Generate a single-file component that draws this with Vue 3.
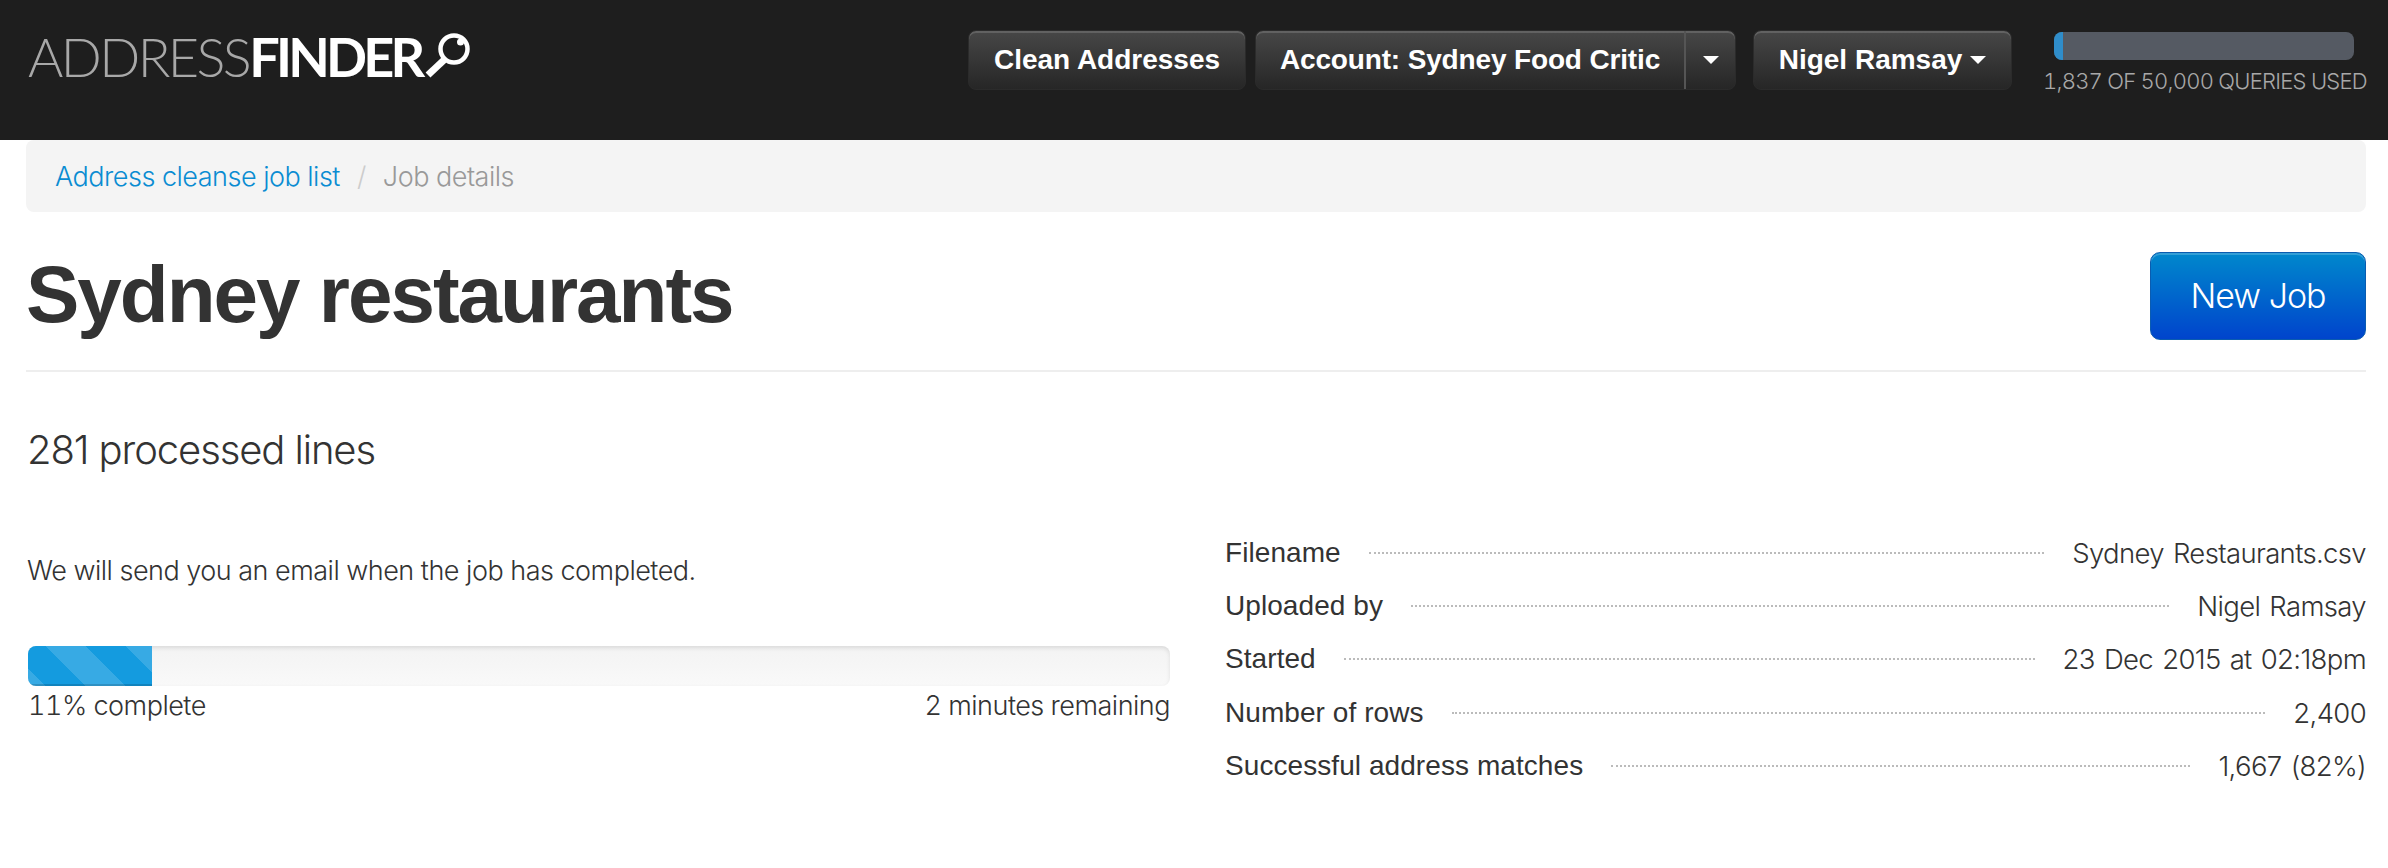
<script setup>
const details = [
  { label: 'Filename', value: 'Sydney Restaurants.csv' },
  { label: 'Uploaded by', value: 'Nigel Ramsay' },
  { label: 'Started', value: '23 Dec 2015 at 02:18pm' },
  { label: 'Number of rows', value: '2,400' },
  { label: 'Successful address matches', value: '1,667 (82%)' }
]
</script>

<template>
  <div class="page">
    <header class="topbar">
      <div class="logo">
        <span class="logo-thin">ADDRESS</span><span class="logo-bold">FINDER</span>
        <svg class="key" width="50" height="48" viewBox="0 0 50 48">
          <circle cx="33" cy="17" r="13.5" fill="none" stroke="#fff" stroke-width="4.5" />
          <path d="M23 28 L7 43" stroke="#fff" stroke-width="7" fill="none" />
          <circle cx="39.5" cy="10" r="3.5" fill="#fff" />
        </svg>
      </div>
      <nav class="nav">
        <button class="dark-btn clean">Clean Addresses</button>
        <div class="dark-btn account">
          <span class="account-label">Account: Sydney Food Critic</span>
          <span class="account-caret"><i class="caret"></i></span>
        </div>
        <button class="dark-btn user">Nigel Ramsay<i class="caret user-caret"></i></button>
      </nav>
      <div class="usage">
        <div class="usage-track"><div class="usage-fill"></div></div>
        <div class="usage-text">1,837 OF 50,000 QUERIES USED</div>
      </div>
    </header>

    <main class="content">
      <div class="crumbs">
        <a class="crumb-link">Address cleanse job list</a>
        <span class="crumb-sep">/</span>
        <span class="crumb-current">Job details</span>
      </div>

      <div class="title-row">
        <h1>Sydney restaurants</h1>
        <button class="new-job">New Job</button>
      </div>

      <h2>281 processed lines</h2>

      <div class="columns">
        <section class="status">
          <p>We will send you an email when the job has completed.</p>
          <div class="progress"><div class="progress-fill"></div></div>
          <div class="progress-labels">
            <span>11% complete</span>
            <span>2 minutes remaining</span>
          </div>
        </section>
        <section class="details">
          <div v-for="d in details" :key="d.label" class="detail">
            <span class="detail-label">{{ d.label }}</span>
            <span class="dots"></span>
            <span class="detail-value">{{ d.value }}</span>
          </div>
        </section>
      </div>
    </main>
  </div>
</template>

<style>
html, body { margin: 0; background: #fff; }
</style>

<style scoped>
.page {
  width: 2388px;
  height: 868px;
  overflow: hidden;
  font-family: "Liberation Sans", Arial, sans-serif;
  color: #333;
}
.topbar {
  height: 140px;
  box-sizing: border-box;
  background: #1e1e1e;
  display: flex;
  align-items: flex-start;
  padding: 0 23px 0 28px;
}
.logo {
  display: flex;
  align-items: flex-start;
  margin-top: 29px;
  height: 50px;
  line-height: 56px;
  font-size: 54px;
  font-family: "Lato", sans-serif;
  color: #fff;
}
.logo-thin { font-weight: 300; letter-spacing: -2.6px; color: #a8a8a8; }
.logo-bold { font-weight: 700; letter-spacing: -3.8px; }
.key { margin-top: 3px; margin-left: 0; }
.nav {
  margin-left: auto;
  margin-top: 30px;
  display: flex;
  gap: 9px;
}
.dark-btn {
  box-sizing: border-box;
  height: 60px;
  border: 1px solid #2b2b2b;
  border-radius: 8px;
  background: linear-gradient(#474747, #262626);
  box-shadow: inset 0 2px 0 rgba(255, 255, 255, .15);
  color: #fff;
  font: bold 28px/58px "Liberation Sans", Arial, sans-serif;
  padding: 0;
  display: flex;
  align-items: center;
  justify-content: center;
}
.clean { width: 278px; }
.account { width: 481px; justify-content: flex-start; margin-right: 8px; letter-spacing: -.15px; }
.account-label { width: 428px; text-align: center; }
.account-caret {
  flex: 1;
  height: 100%;
  border-left: 2px solid #555;
  display: flex;
  align-items: center;
  justify-content: center;
}
.user { width: 259px; }
.caret {
  display: block;
  width: 0;
  height: 0;
  border-left: 8px solid transparent;
  border-right: 8px solid transparent;
  border-top: 8px solid #fff;
}
.user-caret { margin-left: 8px; }
.usage {
  width: 321px;
  margin-left: 32px;
  padding-top: 32px;
}
.usage-track {
  width: 300px;
  height: 28px;
  margin-left: 10px;
  border-radius: 8px;
  background: #555a63;
  overflow: hidden;
}
.usage-fill { width: 9px; height: 100%; background: #2f8dca; }
.usage-text {
  margin-top: 6px;
  margin-left: -1px;
  font: 300 22px/30px "Inter", sans-serif;
  font-variant-numeric: tabular-nums;
  letter-spacing: -.75px;
  color: #a8a8a8;
  white-space: nowrap;
}
.content { padding: 0 22px 0 26px; }
.crumbs {
  height: 72px;
  box-sizing: border-box;
  background: #f4f4f4;
  border-radius: 8px;
  padding: 2px 29px 0;
  display: flex;
  align-items: center;
  font: 300 27px/32px "Inter", sans-serif;
  letter-spacing: -.5px;
}
.crumb-link { color: #0a8cd2; }
.crumb-sep { color: #ccc; margin: 0 17px; }
.crumb-current { color: #999; }
.title-row {
  display: flex;
  justify-content: space-between;
  align-items: flex-start;
  height: 160px;
  box-sizing: border-box;
  padding-top: 39px;
  border-bottom: 2px solid #eee;
}
h1 {
  margin: 0;
  font: bold 80px/88px "Liberation Sans", Arial, sans-serif;
  letter-spacing: -2px;
  color: #333;
}
.new-job {
  width: 216px;
  height: 88px;
  margin-top: 1px;
  padding: 0;
  border: 1px solid #0a5cb0;
  border-radius: 10px;
  background: linear-gradient(#0088cc, #0044cc);
  box-shadow: inset 0 2px 0 rgba(255, 255, 255, .2);
  color: #fff;
  font: 300 34px/86px "Inter", sans-serif;
  letter-spacing: -1px;
}
h2 {
  margin: 53px 0 0 1px;
  font: 300 40px/50px "Inter", sans-serif;
  letter-spacing: -1.1px;
  color: #333;
}
.columns {
  display: flex;
  justify-content: space-between;
  margin-top: 51px;
}
.status {
  width: 1142px;
  margin-left: 2px;
  padding-top: 25px;
  font: 300 27px/40px "Inter", sans-serif;
  letter-spacing: -.5px;
}
.status p { margin: 0 0 55px -1px; }
.progress {
  height: 40px;
  border-radius: 8px;
  background: linear-gradient(#f3f3f3, #f9f9f9);
  box-shadow: inset 0 2px 4px rgba(0, 0, 0, .1);
  overflow: hidden;
}
.progress-fill {
  width: 124px;
  height: 100%;
  background-color: #149bdf;
  background-image: linear-gradient(45deg,
    rgba(255, 255, 255, .15) 25%, transparent 25%, transparent 50%,
    rgba(255, 255, 255, .15) 50%, rgba(255, 255, 255, .15) 75%, transparent 75%);
  background-size: 80px 80px;
  background-position: 18px 0;
  box-shadow: inset 0 -2px 0 rgba(0, 0, 0, .15);
}
.progress-labels {
  display: flex;
  justify-content: space-between;
  margin-top: 0;
  font-variant-numeric: tabular-nums;
}
.details { width: 1141px; }
.detail {
  display: flex;
  align-items: center;
  height: 53.3px;
  gap: 28px;
}
.detail-label {
  font: 28px/40px "Liberation Sans", Arial, sans-serif;
  letter-spacing: .07px;
}
.detail-value {
  font: 300 27.5px/40px "Inter", sans-serif;
  letter-spacing: -.65px;
  word-spacing: 2px;
}
.dots {
  flex: 1;
  border-top: 2px dotted #bbb;
}
</style>
